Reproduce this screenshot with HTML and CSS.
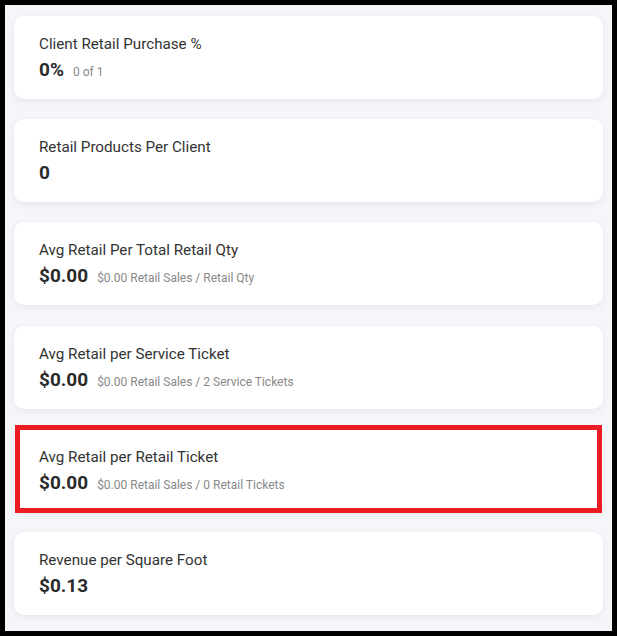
FILE: index.html
```html
<!DOCTYPE html>
<html lang="en">
<head>
  <meta charset="UTF-8" />
  <title>Retail Metrics</title>
  <link rel="stylesheet" href="styles.css">
</head>
<body>

<div class="frame">
  <div class="metrics">
    <div class="card">
      <div class="title">Client Retail Purchase %</div>
      <div class="value">0%<span class="sub">0 of 1</span></div>
    </div>

    <div class="card">
      <div class="title">Retail Products Per Client</div>
      <div class="value">0</div>
    </div>

    <div class="card">
      <div class="title">Avg Retail Per Total Retail Qty</div>
      <div class="value">$0.00<span class="sub">$0.00 Retail Sales / Retail Qty</span></div>
    </div>

    <div class="card">
      <div class="title">Avg Retail per Service Ticket</div>
      <div class="value">$0.00<span class="sub">$0.00 Retail Sales / 2 Service Tickets</span></div>
    </div>

    <div class="card highlight">
      <div class="title">Avg Retail per Retail Ticket</div>
      <div class="value">$0.00<span class="sub">$0.00 Retail Sales / 0 Retail Tickets</span></div>
    </div>

    <div class="card">
      <div class="title">Revenue per Square Foot</div>
      <div class="value">$0.13</div>
    </div>
  </div>
</div>

</body>
</html>
```

FILE: styles.css
```css
body {
  margin: 0;
  background-color: #000;
  font-family: Roboto, "Liberation Sans", sans-serif;
}
.frame {
  margin: 5px;
  height: 626px;
  width: 607px;
  background-color: #f5f6fa;
  overflow: hidden;
}
.metrics {
  display: flex;
  flex-direction: column;
  gap: 20.2px;
  padding: 11px 9px;
}
.card {
  position: relative;
  background: #fff;
  border-radius: 10px;
  height: 83px;
  box-sizing: border-box;
  padding: 19px 25px;
  display: flex;
  flex-direction: column;
  gap: 5px;
  box-shadow: 0 2px 6px rgba(40, 50, 80, 0.08);
}
.title {
  font-size: 15.2px;
  color: #333;
}
.value {
  font-size: 19px;
  font-weight: 700;
  color: #2a2a2a;
}
.sub {
  font-size: 12px;
  font-weight: 400;
  color: #888;
  margin-left: 9px;
}
.highlight::after {
  content: "";
  position: absolute;
  top: -4px;
  left: 1px;
  right: 1px;
  bottom: -1px;
  border: 5px solid #ec1c24;
}
```
